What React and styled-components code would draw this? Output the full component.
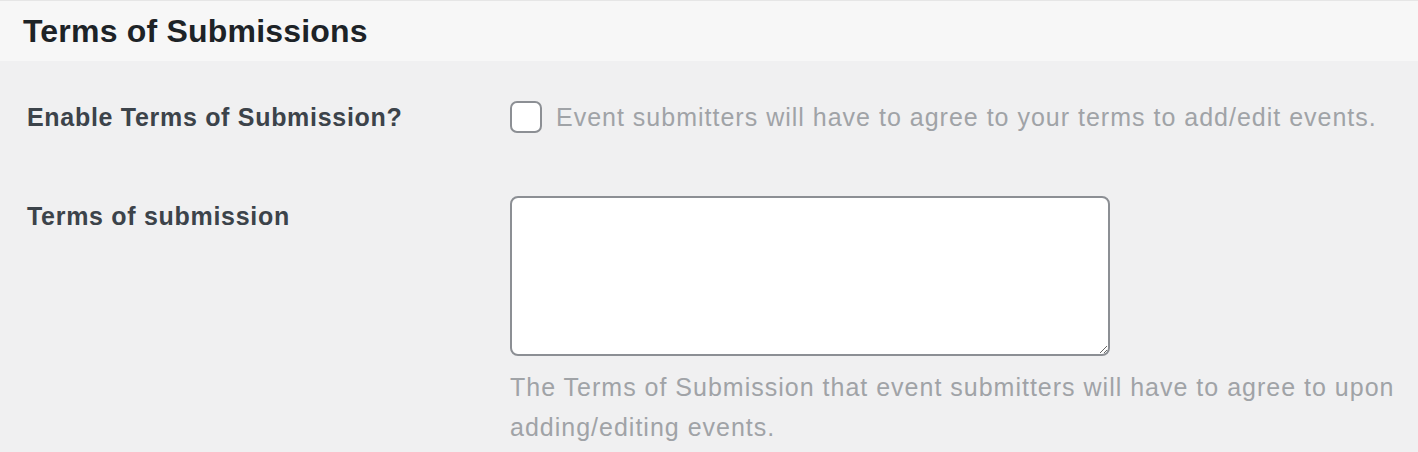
import React from 'react'
import styled, { createGlobalStyle } from 'styled-components'

const GlobalStyle = createGlobalStyle`
  body {
    margin: 0;
    background: #f0f0f1;
    font-family: "Liberation Sans", Arial, sans-serif;
  }
`;

const Header = styled.div`
  display: flex;
  align-items: center;
  height: 60px;
  padding: 0 23px;
  background: #f7f7f7;
  border-top: 1px solid #e6e6e6;
`;

const Title = styled.h2`
  margin: 0;
  font-size: 32px;
  font-weight: 700;
  letter-spacing: 0.2px;
  color: #1d2327;
`;

const Row = styled.div`
  display: grid;
  grid-template-columns: 510px 1fr;
  align-items: ${props => (props.top ? 'start' : 'center')};
  margin-top: ${props => props.gap}px;
`;

const Label = styled.div`
  padding-left: 27px;
  padding-top: ${props => (props.top ? '5px' : '0')};
  font-size: 25px;
  font-weight: 700;
  letter-spacing: 0.7px;
  color: #3c434a;
  line-height: 30px;
`;

const Field = styled.div`
  display: flex;
  align-items: center;
  gap: 14px;
`;

const Checkbox = styled.span`
  width: 28px;
  height: 28px;
  border: 2px solid #8c8f94;
  border-radius: 7px;
  background: #fff;
`;

const Description = styled.p`
  margin: ${props => (props.below ? '11px 0 0' : '0')};
  max-width: 900px;
  font-size: 25px;
  letter-spacing: 1px;
  line-height: 40px;
  color: #a0a3a7;
`;

const TextArea = styled.textarea`
  display: block;
  box-sizing: border-box;
  width: 600px;
  height: 160px;
  border: 2px solid #8c8f94;
  border-radius: 8px;
  background: #fff;
`;

export default function App() {
  return (
    <>
      <GlobalStyle />
      <Header>
        <Title>Terms of Submissions</Title>
      </Header>
      <Row gap={36}>
        <Label>Enable Terms of Submission?</Label>
        <Field>
          <Checkbox />
          <Description>Event submitters will have to agree to your terms to add/edit events.</Description>
        </Field>
      </Row>
      <Row gap={59} top>
        <Label top>Terms of submission</Label>
        <div>
          <TextArea />
          <Description below>
            The Terms of Submission that event submitters will have to agree to upon adding/editing events.
          </Description>
        </div>
      </Row>
    </>
  )
}
